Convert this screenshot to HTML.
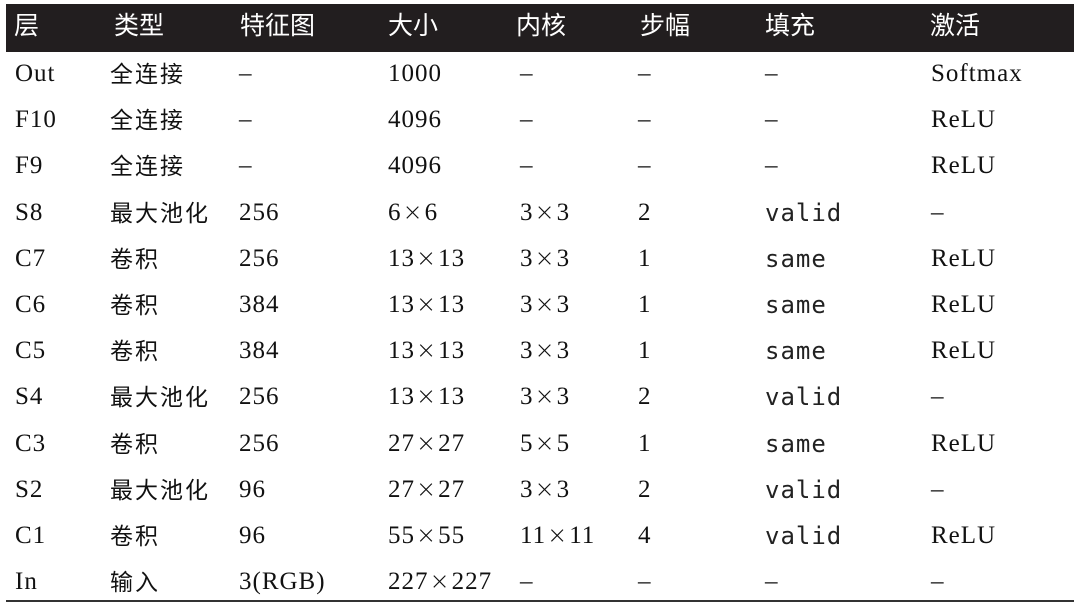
<!DOCTYPE html>
<html><head><meta charset="utf-8"><style>
html,body{margin:0;padding:0;background:#fff;width:1080px;height:609px;overflow:hidden;position:relative}
.hd{position:absolute;left:6px;top:4px;width:1068px;height:48px;background:#221e1f}
.h{position:absolute;top:12px;color:#fff;font:25px "Noto Sans CJK SC",sans-serif;line-height:25px}
.c{position:absolute;font:25px "Liberation Serif","Noto Sans CJK SC",serif;color:#111;line-height:24px;letter-spacing:1px;white-space:nowrap}
.z{font-family:"Noto Sans CJK SC",sans-serif;font-weight:400;letter-spacing:2px;font-size:23px;top:-2px}
.m{font-family:"DejaVu Sans Mono",monospace;font-size:24px;letter-spacing:1px;color:#222}
.x{font-family:"DejaVu Sans",sans-serif;font-weight:300;line-height:0;font-size:24px;margin:0 1px}
.line{position:absolute;left:6px;width:1068px;top:600px;height:2px;background:#333}
</style></head><body>
<div class="hd"></div>
<div class="h" style="left:14px">层</div>
<div class="h" style="left:114px">类型</div>
<div class="h" style="left:240px">特征图</div>
<div class="h" style="left:388px">大小</div>
<div class="h" style="left:516px">内核</div>
<div class="h" style="left:640px">步幅</div>
<div class="h" style="left:765px">填充</div>
<div class="h" style="left:930px">激活</div>
<div id="rows"></div>
<div class="line"></div>
<script>
var d=[["Out","全连接","–","1000","–","–","–","Softmax"],
["F10","全连接","–","4096","–","–","–","ReLU"],
["F9","全连接","–","4096","–","–","–","ReLU"],
["S8","最大池化","256","6×6","3×3","2","valid","–"],
["C7","卷积","256","13×13","3×3","1","same","ReLU"],
["C6","卷积","384","13×13","3×3","1","same","ReLU"],
["C5","卷积","384","13×13","3×3","1","same","ReLU"],
["S4","最大池化","256","13×13","3×3","2","valid","–"],
["C3","卷积","256","27×27","5×5","1","same","ReLU"],
["S2","最大池化","96","27×27","3×3","2","valid","–"],
["C1","卷积","96","55×55","11×11","4","valid","ReLU"],
["In","输入","3(RGB)","227×227","–","–","–","–"]];
var xs=[15,110,239,388,520,638,765,931],h="";
d.forEach(function(r,i){var y=62+i*46.2;r.forEach(function(t,j){var cl="c";if(j==1)cl+=" z";if(j==6&&t!="–")cl+=" m";
var tt=t.replace(/×/g,'<span class="x">×</span>');
var yy=j==1?y-2:y;
h+='<div class="'+cl+'" style="left:'+xs[j]+'px;top:'+yy+'px">'+tt+'</div>';});});
document.getElementById("rows").innerHTML=h;
</script>
</body></html>
